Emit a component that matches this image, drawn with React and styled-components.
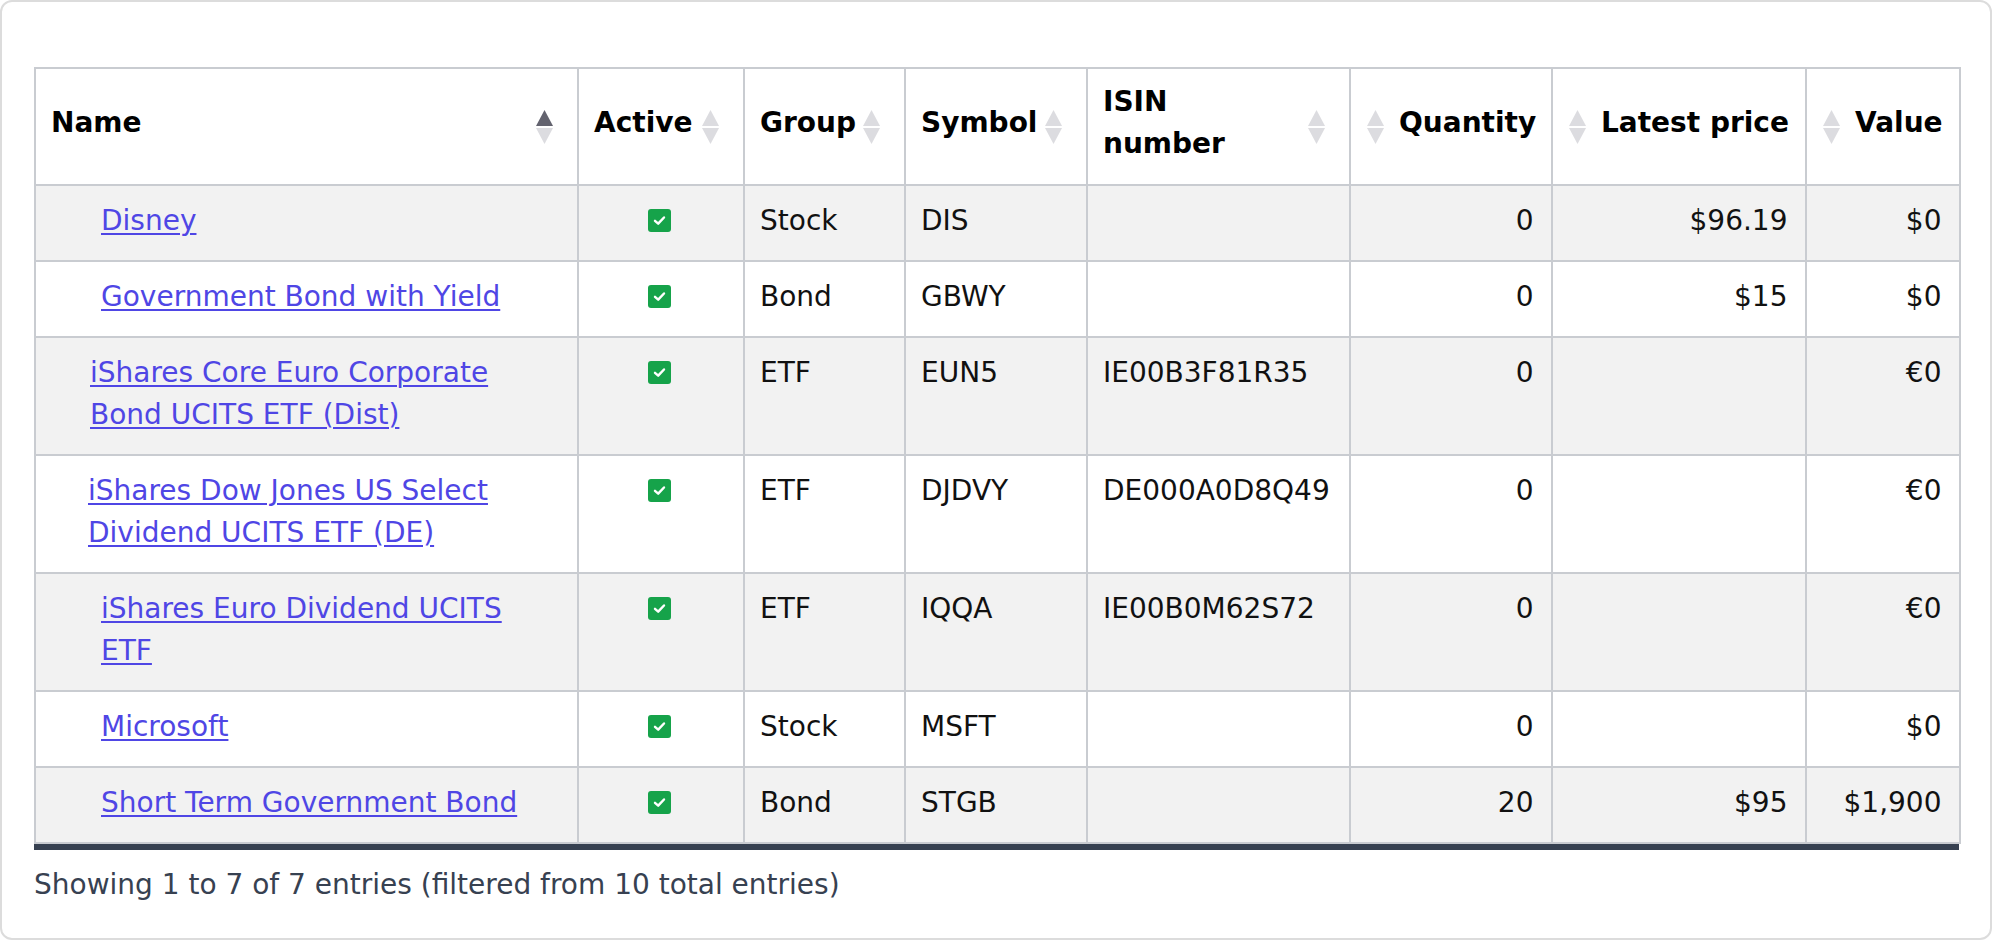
import React from 'react';
import styled, { createGlobalStyle } from 'styled-components';

const GlobalStyle = createGlobalStyle`
  html, body {
    margin: 0;
    padding: 0;
    background: #fff;
  }
  body {
    font-family: "DejaVu Sans", "Liberation Sans", sans-serif;
    color: #111;
  }
`;

const Card = styled.section`
  box-sizing: border-box;
  width: 1992px;
  height: 940px;
  border: 2px solid #dcdcdc;
  border-radius: 12px;
  padding: 65px 31px 34px 32px;
  background: #fff;
`;

const TableWrap = styled.div`
  border-bottom: 6px solid #374151;
`;

const Table = styled.table`
  width: 100%;
  border-collapse: collapse;
  table-layout: fixed;
  font-size: 28px;
  line-height: 42px;
`;

const HeaderCell = styled.th`
  position: relative;
  border: 2px solid #c9ccd1;
  padding: ${(p) => (p.$align === 'right' ? '12px 17.5px 19px 48px' : '12px 52px 19px 15px')};
  text-align: ${(p) => p.$align};
  vertical-align: middle;
  font-weight: bold;
  color: #000;
  white-space: nowrap;
  background: #fff;
`;

const SortMark = styled.svg`
  position: absolute;
  top: 50%;
  transform: translateY(-50%);
  ${(p) => (p.$align === 'right' ? 'left: 15.5px;' : 'right: 24px;')}
`;

const Row = styled.tr`
  background: ${(p) => (p.$striped ? '#f2f2f2' : '#fff')};
`;

const Cell = styled.td`
  border: 2px solid #c9ccd1;
  padding: 14px 17.5px 18px 15px;
  text-align: ${(p) => p.$align || 'left'};
  vertical-align: top;
  color: #111;
`;

const NameLink = styled.a`
  display: block;
  padding-left: ${(p) => p.$indent}px;
  padding-right: 8px;
  color: #4f46e5;
  text-decoration: underline;
  text-decoration-thickness: 2px;
  text-underline-offset: 3px;
  cursor: pointer;
`;

const Check = styled.span`
  display: inline-flex;
  align-items: center;
  justify-content: center;
  width: 23px;
  height: 23px;
  border-radius: 3px;
  background: #16a34a;
  vertical-align: middle;
  margin-top: -4px;
`;

const Footer = styled.div`
  margin-top: 14px;
  font-size: 28px;
  line-height: 42px;
  color: #374151;
`;

const columns = [
  { key: 'name', label: 'Name', width: 543, align: 'left', sorted: true },
  { key: 'active', label: 'Active', width: 166, align: 'left' },
  { key: 'group', label: 'Group', width: 161, align: 'left' },
  { key: 'symbol', label: 'Symbol', width: 182, align: 'left' },
  { key: 'isin', label: ['ISIN', 'number'], width: 263, align: 'left' },
  { key: 'qty', label: 'Quantity', width: 202, align: 'right' },
  { key: 'price', label: 'Latest price', width: 254, align: 'right' },
  { key: 'value', label: 'Value', width: 154, align: 'right' },
];

const rows = [
  { name: 'Disney', indent: 50, group: 'Stock', symbol: 'DIS', isin: '', qty: '0', price: '$96.19', value: '$0' },
  { name: 'Government Bond with Yield', indent: 50, group: 'Bond', symbol: 'GBWY', isin: '', qty: '0', price: '$15', value: '$0' },
  { name: 'iShares Core Euro Corporate Bond UCITS ETF (Dist)', indent: 39, group: 'ETF', symbol: 'EUN5', isin: 'IE00B3F81R35', qty: '0', price: '', value: '€0' },
  { name: 'iShares Dow Jones US Select Dividend UCITS ETF (DE)', indent: 37, group: 'ETF', symbol: 'DJDVY', isin: 'DE000A0D8Q49', qty: '0', price: '', value: '€0' },
  { name: 'iShares Euro Dividend UCITS ETF', indent: 50, group: 'ETF', symbol: 'IQQA', isin: 'IE00B0M62S72', qty: '0', price: '', value: '€0' },
  { name: 'Microsoft', indent: 50, group: 'Stock', symbol: 'MSFT', isin: '', qty: '0', price: '', value: '$0' },
  { name: 'Short Term Government Bond', indent: 50, group: 'Bond', symbol: 'STGB', isin: '', qty: '20', price: '$95', value: '$1,900' },
];

const SortIcon = ({ align, sorted }) => (
  <SortMark $align={align} width="17" height="34" viewBox="0 0 17 34">
    <polygon points="8.5,0 17,16 0,16" fill={sorted ? '#63636f' : '#dcdce0'} />
    <polygon points="0,18 17,18 8.5,34" fill="#dcdce0" />
  </SortMark>
);

const CheckBox = () => (
  <Check>
    <svg width="15" height="15" viewBox="0 0 16 16">
      <path d="M3.2 8.4 L6.6 11.4 L12.8 4.8" fill="none" stroke="#fff" strokeWidth="2.6" strokeLinecap="round" strokeLinejoin="round" />
    </svg>
  </Check>
);

const App = () => (
  <>
    <GlobalStyle />
    <Card>
      <TableWrap>
        <Table>
          <colgroup>
            {columns.map((c) => (
              <col key={c.key} style={{ width: c.width }} />
            ))}
          </colgroup>
          <thead>
            <tr>
              {columns.map((c) => (
                <HeaderCell key={c.key} $align={c.align}>
                  {Array.isArray(c.label) ? (
                    <>
                      {c.label[0]}
                      <br />
                      {c.label[1]}
                    </>
                  ) : (
                    c.label
                  )}
                  <SortIcon align={c.align} sorted={c.sorted} />
                </HeaderCell>
              ))}
            </tr>
          </thead>
          <tbody>
            {rows.map((r, i) => (
              <Row key={r.symbol} $striped={i % 2 === 0}>
                <Cell>
                  <NameLink $indent={r.indent}>{r.name}</NameLink>
                </Cell>
                <Cell $align="center">
                  <CheckBox />
                </Cell>
                <Cell>{r.group}</Cell>
                <Cell>{r.symbol}</Cell>
                <Cell>{r.isin}</Cell>
                <Cell $align="right">{r.qty}</Cell>
                <Cell $align="right">{r.price}</Cell>
                <Cell $align="right">{r.value}</Cell>
              </Row>
            ))}
          </tbody>
        </Table>
      </TableWrap>
      <Footer>Showing 1 to 7 of 7 entries (filtered from 10 total entries)</Footer>
    </Card>
  </>
);

export default App;
